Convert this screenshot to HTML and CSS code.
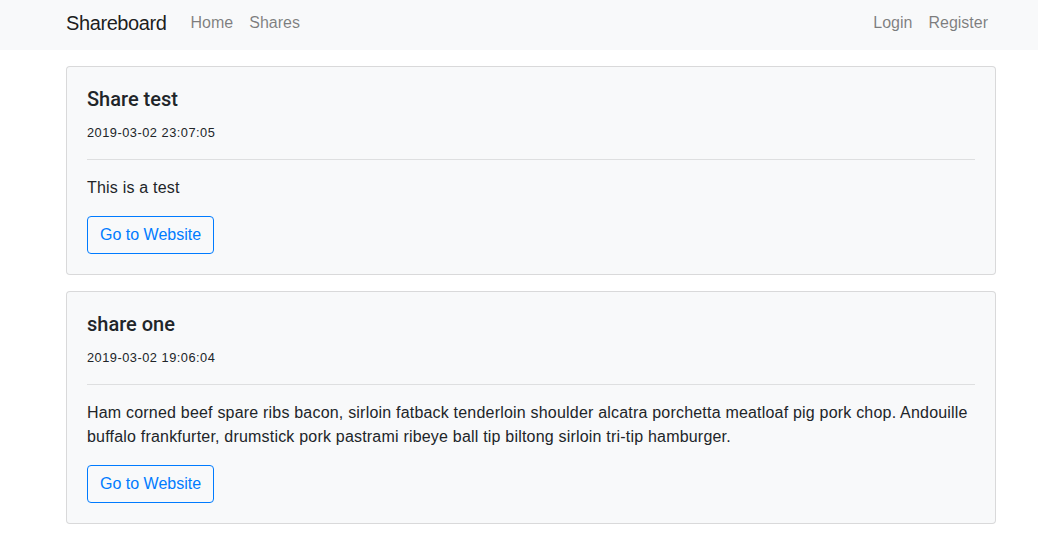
FILE: index.html
```html
<!DOCTYPE html>
<html lang="en">
<head>
<meta charset="utf-8">
<title>Shareboard</title>
<link rel="stylesheet" href="styles.css">
</head>
<body>
<nav class="navbar">
  <div class="container nav-inner">
    <a class="brand" href="#">Shareboard</a>
    <ul class="nav-list">
      <li><a class="nav-link" href="#">Home</a></li>
      <li><a class="nav-link" href="#">Shares</a></li>
    </ul>
    <ul class="nav-list nav-right">
      <li><a class="nav-link" href="#">Login</a></li>
      <li><a class="nav-link" href="#">Register</a></li>
    </ul>
  </div>
</nav>
<main class="container content">
  <div class="card">
    <div class="card-body">
      <h5 class="card-title">Share test</h5>
      <small class="date">2019-03-02 23:07:05</small>
      <hr class="divider">
      <p class="card-text">This is a test</p>
      <a class="btn-outline" href="#">Go to Website</a>
    </div>
  </div>
  <div class="card">
    <div class="card-body">
      <h5 class="card-title">share one</h5>
      <small class="date">2019-03-02 19:06:04</small>
      <hr class="divider">
      <p class="card-text">Ham corned beef spare ribs bacon, sirloin fatback tenderloin shoulder alcatra porchetta meatloaf pig pork chop. Andouille buffalo frankfurter, drumstick pork pastrami ribeye ball tip biltong sirloin tri-tip hamburger.</p>
      <a class="btn-outline" href="#">Go to Website</a>
    </div>
  </div>
</main>
</body>
</html>
```
FILE: styles.css
```css
* { box-sizing: border-box; }
html, body {
  margin: 0;
  padding: 0;
}
body {
  font-family: "Liberation Sans", Arial, sans-serif;
  font-size: 16px;
  line-height: 1.5;
  letter-spacing: 0.2px;
  color: #212529;
  background: #fff;
}
.container {
  width: 960px;
  margin-left: 51px;
  padding: 0 15px;
}
.navbar {
  background: #f8f9fa;
  height: 50px;
}
.nav-inner {
  display: flex;
  align-items: center;
  height: 50px;
  padding-bottom: 4px;
}
.brand {
  font-size: 20px;
  line-height: 30px;
  letter-spacing: -0.4px;
  color: rgba(0,0,0,.9);
  text-decoration: none;
  margin-right: 16px;
}
.nav-list {
  list-style: none;
  margin: 0;
  padding: 0;
  display: flex;
}
.nav-right {
  margin-left: auto;
}
.nav-link {
  display: block;
  padding: 0 8px;
  line-height: 24px;
  letter-spacing: 0;
  color: rgba(0,0,0,.5);
  text-decoration: none;
}
.content {
  padding-top: 16px;
}
.card {
  background: #f8f9fa;
  border: 1px solid rgba(0,0,0,.125);
  border-radius: 4px;
  margin-bottom: 16px;
}
.card-body {
  padding: 20px;
}
.card-title {
  margin: 0 0 12px;
  font-family: Roboto, "Liberation Sans", sans-serif;
  font-size: 20px;
  font-weight: 500;
  line-height: 24px;
  letter-spacing: 0;
}
.date {
  display: block;
  font-size: 12.8px;
  line-height: 20px;
  letter-spacing: 0.5px;
}
.divider {
  margin: 16px 0;
  border: 0;
  border-top: 1px solid rgba(0,0,0,.1);
}
.card-text {
  margin: 0 0 16px;
}
.btn-outline {
  display: inline-block;
  padding: 6px 12px;
  font-size: 16px;
  line-height: 24px;
  letter-spacing: 0;
  color: #007bff;
  border: 1px solid #007bff;
  border-radius: 4px;
  text-decoration: none;
}
```
